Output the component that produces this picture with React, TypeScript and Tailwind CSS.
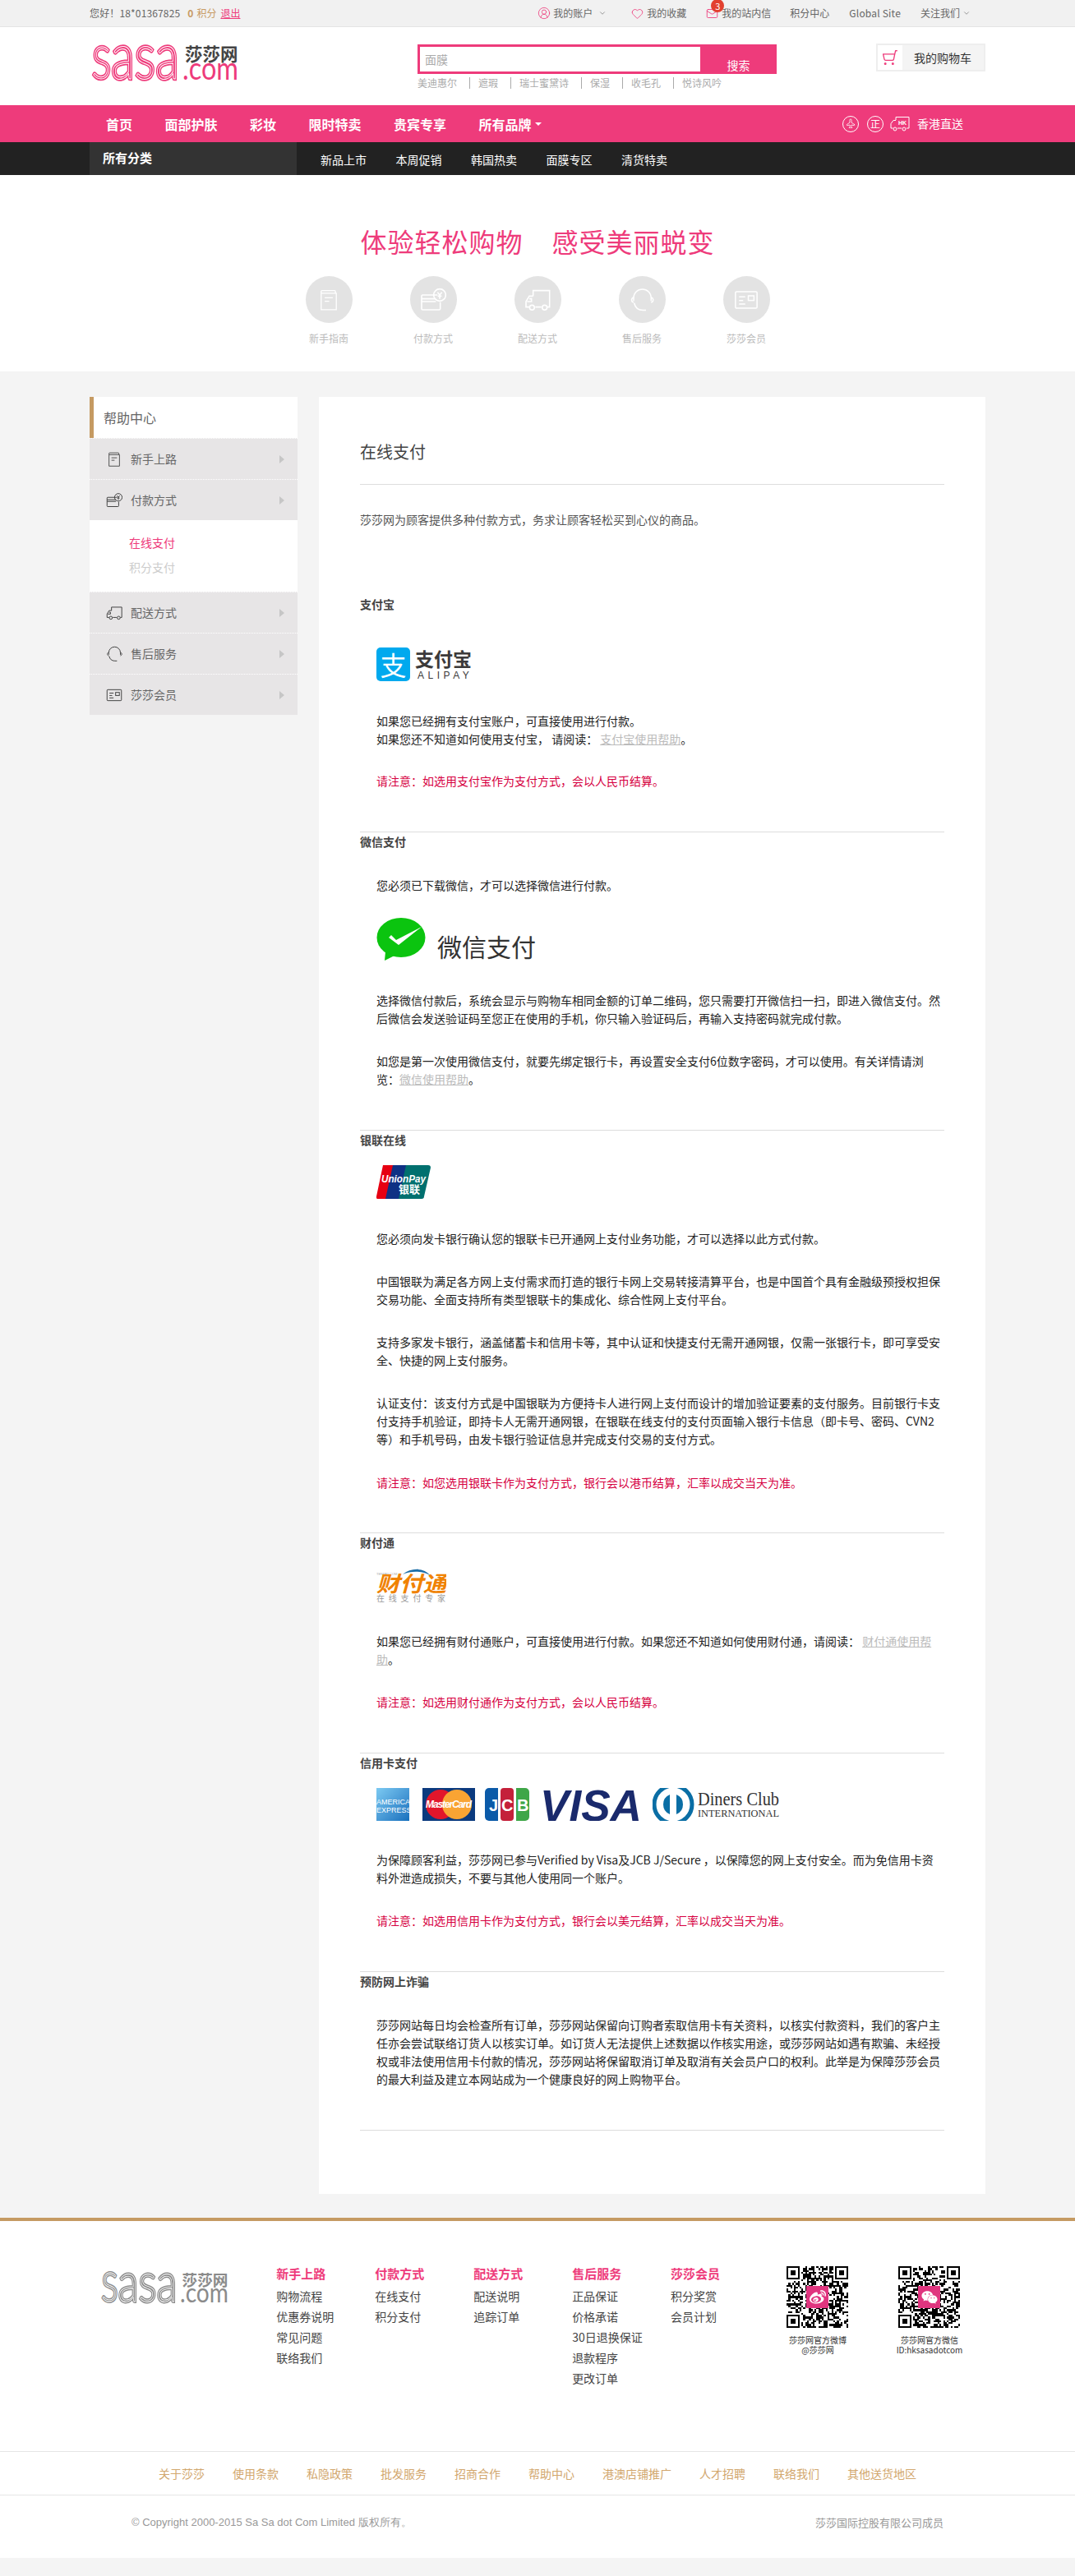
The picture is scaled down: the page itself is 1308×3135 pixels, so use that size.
import { ChevronDown, CircleUserRound, Heart, Mail, Plane, ShoppingCart } from "lucide-react";
import type { ReactNode } from "react";
import { FaWeibo, FaWeixin } from "react-icons/fa";

function SasaLogo({ width, color, cnColor }: { width: number; color: string; cnColor: string }) {
    return (
        <svg width={width} height={(width * 46) / 181} viewBox="0 0 181 46" className="block overflow-visible">
            {[
                { stroke: color, w: 4.5 },
                { stroke: "#fff", w: 1 },
            ].map((l) => (
                <text key={l.stroke} x="3" y="43" fill="none" stroke={l.stroke} strokeWidth={l.w} fontFamily="Lato, sans-serif" fontWeight="300" textLength="106" lengthAdjust="spacingAndGlyphs">
                    <tspan fontSize="56">S</tspan>
                    <tspan fontSize="78">asa</tspan>
                </text>
            ))}
            <text x="116" y="21" fill={cnColor} fontSize="21.5" fontWeight="700" fontFamily="'Noto Sans CJK SC', sans-serif">莎莎网</text>
            <text x="113" y="44" fill={color} fontSize="38" fontFamily="Lato, sans-serif" textLength="68" lengthAdjust="spacingAndGlyphs">.com</text>
        </svg>
    );
}

function BookIcon({ size }: { size: number }) {
    return (
        <svg width={size} height={size} viewBox="0 0 24 24" fill="none" stroke="currentColor" strokeWidth="1.2">
            <path d="M3.5 4.5V23h17V4.5zM3.5 4.5V2.5a1 1 0 0 1 1-1H18.5a1 1 0 0 1 1 1V4.5M7.5 9.5h9M7.5 13.5h5" />
        </svg>
    );
}

function PayIcon({ size }: { size: number }) {
    return (
        <svg width={size} height={size} viewBox="0 0 24 24" fill="none" stroke="currentColor" strokeWidth="1.2">
            <path d="M16 7.5H2.5a1 1 0 0 0-1 1V20a1 1 0 0 0 1 1h15a1 1 0 0 0 1-1v-6M1.5 11h13M1.5 13.5h13" />
            <circle cx="18" cy="7.5" r="5.5" />
            <path d="M16 5l2 2.5 2-2.5M18 7.5V11M16.2 8.5h3.6" />
        </svg>
    );
}

function TruckIcon({ size }: { size: number }) {
    return (
        <svg width={size} height={size} viewBox="0 0 24 24" fill="none" stroke="currentColor" strokeWidth="1.2">
            <path d="M8 8.5V3.5h15v15h-2M15.5 18.5H10M4.5 18.5H1.5v-5l3-5H8" />
            <path d="M4.5 11h2v2.5H2.5" />
            <circle cx="7" cy="19" r="2.2" />
            <circle cx="18.5" cy="19" r="2.2" />
        </svg>
    );
}

function HeadsetIcon({ size }: { size: number }) {
    return (
        <svg width={size} height={size} viewBox="0 0 24 24" fill="none" stroke="currentColor" strokeWidth="1.2">
            <path d="M4 13V10a8.5 8.5 0 0 1 17 0v3M4 9.5c-1.5.5-2 1.5-2 2.5s.5 2 2 2.5M21 9.5c1.5.5 2 1.5 2 2.5s-.5 2-2 2.5M4.5 15c1 4.500 4 7 8.500 7h3" />
        </svg>
    );
}

function MemberIcon({ size }: { size: number }) {
    return (
        <svg width={size} height={size} viewBox="0 0 24 24" fill="none" stroke="currentColor" strokeWidth="1.2">
            <rect x="1.500" y="4" width="21" height="16" rx="1" />
            <path d="M5 9h6M5 12.500h4M5 16h6" />
            <rect x="14" y="8" width="5.500" height="4.500" />
        </svg>
    );
}

function TopLink({ children, className }: { children: ReactNode; className: string }) {
    return <span className={"flex items-center " + className}>{children}</span>;
}

function TopBar() {
    return (
        <div className="h-[33px] bg-[#f1f1f1] border-b border-[#e4e4e4]">
            <div className="w-[1090px] mx-auto h-full flex items-center justify-between pr-[18px] text-[12px] text-[#666]">
                <div className="flex items-center">
                    <span className="tracking-[0.15px]">您好！18*01367825</span>
                    <b className="ml-[9px] text-[#c89b64]">0</b>
                    <span className="ml-[4px] text-[#c89b64]">积分</span>
                    <span className="ml-[5px] text-[#ee3b7b] underline">退出</span>
                </div>
                <div className="flex items-center">
                    <TopLink className="gap-[3px]">
                        <CircleUserRound size={16} strokeWidth={1.2} className="text-[#ee3b7b]" />
                        我的账户
                        <ChevronDown size={10} className="ml-[4px] text-[#888]" />
                    </TopLink>
                    <TopLink className="gap-[4px] ml-[30px]">
                        <Heart size={15} strokeWidth={1.3} className="text-[#ee3b7b]" />
                        我的收藏
                    </TopLink>
                    <TopLink className="gap-[4px] ml-[24px] relative">
                        <Mail size={15} strokeWidth={1.4} className="text-[#ee3b7b]" />
                        我的站内信
                        <span className="absolute left-[6px] top-[-8px] w-[16px] h-[16px] rounded-full bg-[#e2402f] text-white text-[11px] leading-[16px] text-center">3</span>
                    </TopLink>
                    <TopLink className="ml-[23px]">积分中心</TopLink>
                    <TopLink className="ml-[24px] tracking-[0.2px]">Global Site</TopLink>
                    <TopLink className="ml-[24px]">
                        关注我们
                        <ChevronDown size={10} className="ml-[3px] text-[#888]" />
                    </TopLink>
                </div>
            </div>
        </div>
    );
}

function Header() {
    return (
        <div className="h-[95px] bg-white">
            <div className="w-[1090px] mx-auto flex items-start pt-[20px]">
                <div className="w-[399px]">
                    <SasaLogo width={181} color="#ee3b7b" cnColor="#444" />
                </div>
                <div className="w-[437px] mt-[1px]">
                    <div className="h-[36px] flex border-[3px] border-r-0 border-[#ee3b7b]">
                        <input placeholder="面膜" className="w-[341px] h-full bg-white pl-[6px] text-[14px] placeholder:text-[#aaa] outline-none" />
                        <div className="flex-1 bg-[#ee3b7b] text-white text-[14px] leading-[20px] text-center pt-[15px] -my-[3px]">搜索</div>
                    </div>
                    <div className="mt-[4px] flex items-center text-[12px] leading-[14px] text-[#aaa]">
                        {["美迪惠尔", "遮瑕", "瑞士蜜黛诗", "保湿", "收毛孔", "悦诗风吟"].map((w, i) => (
                            <span key={w} className={i > 0 ? "ml-[15px] pl-[10px] border-l border-[#aaa]" : ""}>{w}</span>
                        ))}
                    </div>
                </div>
                <div className="ml-auto w-[133px] h-[34px] flex bg-[#f4f4f4] border-2 border-[#eee]">
                    <div className="w-[30px] bg-white flex items-center justify-center">
                        <ShoppingCart size={20} strokeWidth={1.6} className="text-[#ee3b7b] -scale-x-100" />
                    </div>
                    <span className="ml-[14px] text-[14px] leading-[30px] text-[#333]">我的购物车</span>
                </div>
            </div>
        </div>
    );
}

function Nav() {
    return (
        <>
            <div className="h-[45px] bg-[#ee3b7b] text-white">
                <div className="w-[1090px] mx-auto h-full flex items-center pl-[20px] pr-[27px]">
                    <div className="flex gap-[39.500px] text-[16px] font-bold">
                        <span>首页</span>
                        <span>面部护肤</span>
                        <span>彩妆</span>
                        <span>限时特卖</span>
                        <span>贵宾专享</span>
                        <span className="flex items-center">
                            所有品牌
                            <span className="ml-[4px] border-x-[4px] border-t-[4px] border-x-transparent border-t-white" />
                        </span>
                    </div>
                    <div className="ml-auto flex items-center">
                        <span className="w-[20px] h-[20px] rounded-full border border-white flex items-center justify-center">
                            <Plane size={12} strokeWidth={1.5} className="-rotate-45" />
                        </span>
                        <span className="ml-[10px] w-[20px] h-[20px] rounded-full border border-white text-[12px] leading-[18px] text-center">正</span>
                        <svg width="24" height="20" viewBox="0 0 24 20" fill="none" stroke="white" strokeWidth="1" className="ml-[8px]">
                            <path d="M7 5V1.500h16V15H20M14 15H9M3.500 15H1V9.500l3-4h3" />
                            <circle cx="6" cy="16" r="2" />
                            <circle cx="17" cy="16" r="2" />
                            <text x="10" y="11" fill="white" stroke="none" fontSize="7" fontWeight="700" fontFamily="Liberation Sans, sans-serif">HK</text>
                        </svg>
                        <span className="ml-[9px] text-[14px]">香港直送</span>
                    </div>
                </div>
            </div>
            <div className="h-[40px] bg-[#222] text-white">
                <div className="w-[1090px] mx-auto h-full flex">
                    <div className="w-[252px] bg-[#333] pl-[16px] pt-[8px] text-[15px] font-bold leading-[22px]">所有分类</div>
                    <div className="ml-[29px] flex items-center gap-[35.500px] text-[14px] pt-[2px]">
                        <span>新品上市</span>
                        <span>本周促销</span>
                        <span>韩国热卖</span>
                        <span>面膜专区</span>
                        <span>清货特卖</span>
                    </div>
                </div>
            </div>
        </>
    );
}

const heroItems = [
    { label: "新手指南", icon: <BookIcon size={26} /> },
    { label: "付款方式", icon: <PayIcon size={32} /> },
    { label: "配送方式", icon: <TruckIcon size={32} /> },
    { label: "售后服务", icon: <HeadsetIcon size={30} /> },
    { label: "莎莎会员", icon: <MemberIcon size={30} /> },
];

function Hero() {
    return (
        <div className="h-[239px] bg-white pt-[60px]">
            <div className="flex justify-center gap-[35px] text-[32px] leading-[40px] tracking-[1px] text-[#ee3b7b]">
                <span>体验轻松购物</span>
                <span>感受美丽蜕变</span>
            </div>
            <div className="mt-[23px] flex justify-center">
                {heroItems.map((h) => (
                    <div key={h.label} className="w-[127px] flex flex-col items-center">
                        <div className="w-[57px] h-[57px] rounded-full bg-[#e3e3e3] text-white flex items-center justify-center">{h.icon}</div>
                        <span className="mt-[10px] text-[12px] leading-[18px] text-[#bbb]">{h.label}</span>
                    </div>
                ))}
            </div>
        </div>
    );
}

function SideItem({ icon, label }: { icon: ReactNode; label: string }) {
    return (
        <div className="h-[50px] flex items-center pl-[20px] pr-[16px] bg-[#e7e5e6] border-t border-dotted border-white first:border-t-0 text-[14px] text-[#666]">
            <span className="w-[20px] flex justify-center text-[#444]">{icon}</span>
            <span className="ml-[10px]">{label}</span>
            <span className="ml-auto border-y-[5px] border-l-[6px] border-y-transparent border-l-[#c6c6c6]" />
        </div>
    );
}

function Sidebar() {
    return (
        <div className="w-[253px] shrink-0">
            <div className="h-[50px] bg-white border-l-[5px] border-[#c59a62] pl-[12px] text-[16px] leading-[50px] text-[#666]">帮助中心</div>
            <SideItem icon={<BookIcon size={18} />} label="新手上路" />
            <SideItem icon={<PayIcon size={20} />} label="付款方式" />
            <div className="bg-white pt-[12px] pb-[15px] pl-[48px] text-[14px] leading-[30px]">
                <div className="text-[#ee3b7b]">在线支付</div>
                <div className="text-[#ccc]">积分支付</div>
            </div>
            <SideItem icon={<TruckIcon size={20} />} label="配送方式" />
            <SideItem icon={<HeadsetIcon size={20} />} label="售后服务" />
            <SideItem icon={<MemberIcon size={20} />} label="莎莎会员" />
        </div>
    );
}

function SectionTitle({ children, first }: { children: ReactNode; first?: boolean }) {
    return <h3 className={(first ? "mt-[81px]" : "border-t border-[#ddd]") + " text-[14px] leading-[22px] font-bold text-[#444]"}>{children}</h3>;
}

function Para({ children, className = "" }: { children: ReactNode; className?: string }) {
    return <p className={"pl-[20px] text-[14px] leading-[22px] text-[#222] " + className}>{children}</p>;
}

function Warn({ children, className = "" }: { children: ReactNode; className?: string }) {
    return <p className={"pl-[20px] text-[14px] leading-[22px] text-[#d6003f] " + className}>{children}</p>;
}

function HelpLink({ children }: { children: ReactNode }) {
    return <span className="text-[#bbb] underline">{children}</span>;
}

function AlipayLogo() {
    return (
        <div className="ml-[20px] mt-[42px] h-[41px] flex">
            <div className="w-[41px] h-[41px] rounded-[5px] bg-[#00a9ee] text-white text-[32px] leading-[40px] text-center">支</div>
            <div className="ml-[6px] w-[70px]">
                <div className="text-[23px] leading-[27px] font-bold text-[#3c3a3a] whitespace-nowrap">支付宝</div>
                <div className="text-[12px] leading-[14px] tracking-[4.500px] pl-[3px] text-[#3c3a3a] font-['Liberation_Sans',sans-serif]">ALIPAY</div>
            </div>
        </div>
    );
}

function WechatLogo() {
    return (
        <div className="ml-[20px] mt-[29px] h-[52px] flex items-end">
            <svg width="60" height="52" viewBox="0 0 60 52">
                <ellipse cx="30" cy="24" rx="29.500" ry="24" fill="#0bc40f" />
                <path d="M11 41 L10 52 L22 46z" fill="#0bc40f" />
                <path d="M15 24l3-3 6 6 31-16-28 22z" fill="#fff" />
            </svg>
            <span className="ml-[14px] text-[30px] leading-[36px] text-[#333]">微信支付</span>
        </div>
    );
}

function UnionPayLogo() {
    return (
        <svg width="66" height="41" viewBox="0 0 66 41" className="ml-[20px] mt-[20px] block">
            <path d="M8 0h20l-9 41H2a2 2 0 0 1-2-3z" fill="#e60012" />
            <path d="M20 0h24l-9 41H11z" fill="#0f3184" />
            <path d="M36 0h27a3 3 0 0 1 3 3l-8 35a3 3 0 0 1-3 3H27z" fill="#00706f" />
            <text x="6" y="21" fill="#fff" fontSize="13" fontStyle="italic" fontWeight="700" fontFamily="Liberation Sans, sans-serif" textLength="54" lengthAdjust="spacingAndGlyphs">UnionPay</text>
            <text x="27" y="34" fill="#fff" fontSize="13" fontWeight="700" fontFamily="'Noto Sans CJK SC', sans-serif">银联</text>
        </svg>
    );
}

function TenpayLogo() {
    return (
        <svg width="85" height="41" viewBox="0 0 85 41" className="ml-[20px] mt-[21px] block">
            <path d="M32 7C42 -1 58 -2 66 9C58 3 44 2 32 7z" fill="#1d6ea8" />
            <text x="0" y="8" fill="#aaa" fontSize="4" fontFamily="Liberation Sans, sans-serif">TENPAY.COM</text>
            <text x="0" y="28" fill="#f08200" fontSize="26" fontStyle="italic" fontWeight="700" fontFamily="'Noto Sans CJK SC', sans-serif" textLength="85" lengthAdjust="spacingAndGlyphs">财付通</text>
            <text x="0" y="40" fill="#999" fontSize="10" fontFamily="'Noto Sans CJK SC', sans-serif" textLength="84">在线支付专家</text>
        </svg>
    );
}

function CardLogos() {
    return (
        <div className="ml-[20px] mt-[20px] h-[40px] flex items-stretch">
            <div className="w-[40px] bg-gradient-to-br from-[#7ccaf2] to-[#1470bd] text-white text-[9px] leading-[10px] pt-[12px] text-center font-['Liberation_Sans',sans-serif]">
                AMERICAN
                <br />
                EXPRESS
            </div>
            <svg width="64" height="40" viewBox="0 0 64 40" className="ml-[16px]">
                <rect width="64" height="40" fill="#0b3a7e" />
                <circle cx="22" cy="20" r="18" fill="#e2162b" />
                <circle cx="42" cy="20" r="18" fill="#f9a433" />
                <text x="4" y="24" fill="#fff" fontSize="12" fontStyle="italic" fontWeight="700" fontFamily="Liberation Sans, sans-serif" textLength="56">MasterCard</text>
            </svg>
            <svg width="54" height="40" viewBox="0 0 54 40" className="ml-[12px]">
                <path d="M5 0h11v40H5a5 5 0 0 1-5-5V5a5 5 0 0 1 5-5z" fill="#0b5aa8" />
                <rect x="19" width="16" height="40" rx="4" fill="#c4203a" />
                <path d="M38 0h11a5 5 0 0 1 5 5v30a5 5 0 0 1-5 5H38z" fill="#3fa648" />
                <text x="5" y="28" fill="#fff" fontSize="20" fontWeight="700" fontFamily="Liberation Sans, sans-serif">J</text>
                <text x="20" y="28" fill="#fff" fontSize="20" fontWeight="700" fontFamily="Liberation Sans, sans-serif">C</text>
                <text x="39" y="28" fill="#fff" fontSize="20" fontWeight="700" fontFamily="Liberation Sans, sans-serif">B</text>
            </svg>
            <svg width="124" height="40" viewBox="0 0 124 40" className="ml-[13px]">
                <text x="0" y="40" fill="#1a2a6c" fontSize="54" fontStyle="italic" fontWeight="700" fontFamily="Liberation Sans, sans-serif" textLength="124" lengthAdjust="spacingAndGlyphs">VISA</text>
            </svg>
            <svg width="154" height="40" viewBox="0 0 154 40" className="ml-[13px]">
                <circle cx="25" cy="20" r="23" fill="#fff" stroke="#0a6ea5" strokeWidth="5" />
                <path d="M21 8a13 13 0 0 0 0 24zM29 8a13 13 0 0 1 0 24z" fill="#0a6ea5" />
                <text x="55" y="21" fill="#333" fontSize="24" fontFamily="Liberation Serif, serif" textLength="99" lengthAdjust="spacingAndGlyphs">Diners Club</text>
                <text x="55" y="35" fill="#333" fontSize="13" fontFamily="Liberation Serif, serif" textLength="99" lengthAdjust="spacingAndGlyphs">INTERNATIONAL</text>
            </svg>
        </div>
    );
}

function Content() {
    return (
        <div className="flex-1 bg-white px-[50px] pt-[52px] pb-[77px]">
            <h2 className="text-[20px] leading-[30px] text-[#444] pb-[24px] border-b border-[#ddd]">在线支付</h2>
            <p className="mt-[31px] text-[14px] leading-[22px] text-[#555]">莎莎网为顾客提供多种付款方式，务求让顾客轻松买到心仪的商品。</p>

            <SectionTitle first>支付宝</SectionTitle>
            <AlipayLogo />
            <Para className="mt-[37px]">
                如果您已经拥有支付宝账户，可直接使用进行付款。
                <br />
                如果您还不知道如何使用支付宝， 请阅读： <HelpLink>支付宝使用帮助</HelpLink>。
            </Para>
            <Warn className="mt-[29px] mb-[51px]">请注意：如选用支付宝作为支付方式，会以人民币结算。</Warn>

            <SectionTitle>微信支付</SectionTitle>
            <Para className="mt-[31px]">您必须已下载微信，才可以选择微信进行付款。</Para>
            <WechatLogo />
            <Para className="mt-[37px]">选择微信付款后，系统会显示与购物车相同金额的订单二维码，您只需要打开微信扫一扫，即进入微信支付。然后微信会发送验证码至您正在使用的手机，你只输入验证码后，再输入支持密码就完成付款。</Para>
            <Para className="mt-[30px] mb-[51px]">如您是第一次使用微信支付，就要先绑定银行卡，再设置安全支付6位数字密码，才可以使用。有关详情请浏览：<HelpLink>微信使用帮助</HelpLink>。</Para>

            <SectionTitle>银联在线</SectionTitle>
            <UnionPayLogo />
            <Para className="mt-[37px]">您必须向发卡银行确认您的银联卡已开通网上支付业务功能，才可以选择以此方式付款。</Para>
            <Para className="mt-[30px]">中国银联为满足各方网上支付需求而打造的银行卡网上交易转接清算平台，也是中国首个具有金融级预授权担保交易功能、全面支持所有类型银联卡的集成化、综合性网上支付平台。</Para>
            <Para className="mt-[30px]">支持多家发卡银行，涵盖储蓄卡和信用卡等，其中认证和快捷支付无需开通网银，仅需一张银行卡，即可享受安全、快捷的网上支付服务。</Para>
            <Para className="mt-[30px]">认证支付：该支付方式是中国银联为方便持卡人进行网上支付而设计的增加验证要素的支付服务。目前银行卡支付支持手机验证，即持卡人无需开通网银，在银联在线支付的支付页面输入银行卡信息（即卡号、密码、CVN2等）和手机号码，由发卡银行验证信息并完成支付交易的支付方式。</Para>
            <Warn className="mt-[31px] mb-[50px]">请注意：如您选用银联卡作为支付方式，银行会以港币结算，汇率以成交当天为准。</Warn>

            <SectionTitle>财付通</SectionTitle>
            <TenpayLogo />
            <Para className="mt-[36px]">如果您已经拥有财付通账户，可直接使用进行付款。如果您还不知道如何使用财付通，请阅读： <HelpLink>财付通使用帮助</HelpLink>。</Para>
            <Warn className="mt-[30px] mb-[51px]">请注意：如选用财付通作为支付方式，会以人民币结算。</Warn>

            <SectionTitle>信用卡支付</SectionTitle>
            <CardLogos />
            <Para className="mt-[36px]">为保障顾客利益，莎莎网已参与Verified by Visa及JCB J/Secure ，以保障您的网上支付安全。而为免信用卡资料外泄造成损失，不要与其他人使用同一个账户。</Para>
            <Warn className="mt-[30px] mb-[51px]">请注意：如选用信用卡作为支付方式，银行会以美元结算，汇率以成交当天为准。</Warn>

            <SectionTitle>预防网上诈骗</SectionTitle>
            <Para className="mt-[31px] mb-[51px]">莎莎网站每日均会检查所有订单，莎莎网站保留向订购者索取信用卡有关资料，以核实付款资料，我们的客户主任亦会尝试联络订货人以核实订单。如订货人无法提供上述数据以作核实用途，或莎莎网站如遇有欺骗、未经授权或非法使用信用卡付款的情况，莎莎网站将保留取消订单及取消有关会员户口的权利。此举是为保障莎莎会员的最大利益及建立本网站成为一个健康良好的网上购物平台。</Para>
            <div className="border-t border-[#ddd]" />
        </div>
    );
}

const QR_SIZE = 33;

function qrCells(seed: number) {
    const cells: [number, number][] = [];
    let s = seed;
    for (let y = 0; y < QR_SIZE; y++) {
        for (let x = 0; x < QR_SIZE; x++) {
            s = (s * 1103515245 + 12345) & 0x7fffffff;
            const inFinder = (x < 8 && y < 8) || (x > QR_SIZE - 9 && y < 8) || (x < 8 && y > QR_SIZE - 9);
            if (!inFinder && (s >> 16) % 100 < 52) cells.push([x, y]);
        }
    }
    return cells;
}

function QrCode({ seed, icon, caption, sub }: { seed: number; icon: ReactNode; caption: string; sub: string }) {
    return (
        <div className="w-[136px] flex flex-col items-center">
            <div className="relative w-[75px] h-[75px]">
                <svg width="75" height="75" viewBox={`0 0 ${QR_SIZE} ${QR_SIZE}`} shapeRendering="crispEdges">
                    {qrCells(seed).map(([x, y]) => (
                        <rect key={`${x}-${y}`} x={x} y={y} width="1" height="1" fill="#000" />
                    ))}
                    {[
                        [0, 0],
                        [QR_SIZE - 7, 0],
                        [0, QR_SIZE - 7],
                    ].map(([x, y]) => (
                        <g key={`${x}-${y}`}>
                            <rect x={x} y={y} width="7" height="7" fill="#000" />
                            <rect x={x + 1} y={y + 1} width="5" height="5" fill="#fff" />
                            <rect x={x + 2} y={y + 2} width="3" height="3" fill="#000" />
                        </g>
                    ))}
                </svg>
                <div className="absolute left-[24px] top-[24px] w-[27px] h-[27px] bg-[#e0357f] text-white flex items-center justify-center">{icon}</div>
            </div>
            <div className="mt-[9px] text-[10px] leading-[12px] text-center text-[#333]">
                {caption}
                <br />
                {sub}
            </div>
        </div>
    );
}

const footerColumns = [
    { title: "新手上路", links: ["购物流程", "优惠券说明", "常见问题", "联络我们"] },
    { title: "付款方式", links: ["在线支付", "积分支付"] },
    { title: "配送方式", links: ["配送说明", "追踪订单"] },
    { title: "售后服务", links: ["正品保证", "价格承诺", "30日退换保证", "退款程序", "更改订单"] },
    { title: "莎莎会员", links: ["积分奖赏", "会员计划"] },
];

const footerLinks = ["关于莎莎", "使用条款", "私隐政策", "批发服务", "招商合作", "帮助中心", "港澳店铺推广", "人才招聘", "联络我们", "其他送货地区"];

function Footer() {
    return (
        <div className="bg-white border-t-4 border-[#c59a62]">
            <div className="w-[1090px] mx-auto h-[280px] flex">
                <div className="w-[227.500px] pl-[12px] pt-[61px]">
                    <SasaLogo width={157} color="#8b8b8b" cnColor="#8b8b8b" />
                </div>
                {footerColumns.map((c, i) => (
                    <div key={c.title} className={(i === 4 ? "w-[111px]" : "w-[120px]") + " pt-[54px]"}>
                        <div className="text-[15px] leading-[20px] font-bold text-[#ee3b7b]">{c.title}</div>
                        <div className="mt-[5px] text-[14px] leading-[25px] text-[#444]">
                            {c.links.map((l) => (
                                <div key={l}>{l}</div>
                            ))}
                        </div>
                    </div>
                ))}
                <div className="pt-[55px] flex">
                    <QrCode seed={17} icon={<FaWeibo size={20} />} caption="莎莎网官方微博" sub="@莎莎网" />
                    <QrCode seed={91} icon={<FaWeixin size={20} />} caption="莎莎网官方微信" sub="ID:hksasadotcom" />
                </div>
            </div>
            <div className="h-[54px] border-y border-[#e6e6e6] flex items-center justify-center gap-[34px] text-[14px] text-[#d2a76e]">
                {footerLinks.map((l) => (
                    <span key={l}>{l}</span>
                ))}
            </div>
            <div className="w-[1090px] mx-auto h-[76px] px-[51px] pt-[23px] flex justify-between text-[13px] leading-[20px] text-[#999]">
                <span className="font-['Liberation_Sans',sans-serif]">© Copyright 2000-2015 Sa Sa dot Com Limited 版权所有。</span>
                <span>莎莎国际控股有限公司成员</span>
            </div>
        </div>
    );
}

export default function App() {
    return (
        <div className="min-h-[3135px] bg-[#f4f4f4] pb-[22px] font-['Noto_Sans_CJK_SC',sans-serif]">
            <TopBar />
            <Header />
            <Nav />
            <Hero />
            <div className="w-[1090px] mx-auto pt-[31px] pb-[29px] flex items-start gap-[26px]">
                <Sidebar />
                <Content />
            </div>
            <Footer />
        </div>
    );
}
